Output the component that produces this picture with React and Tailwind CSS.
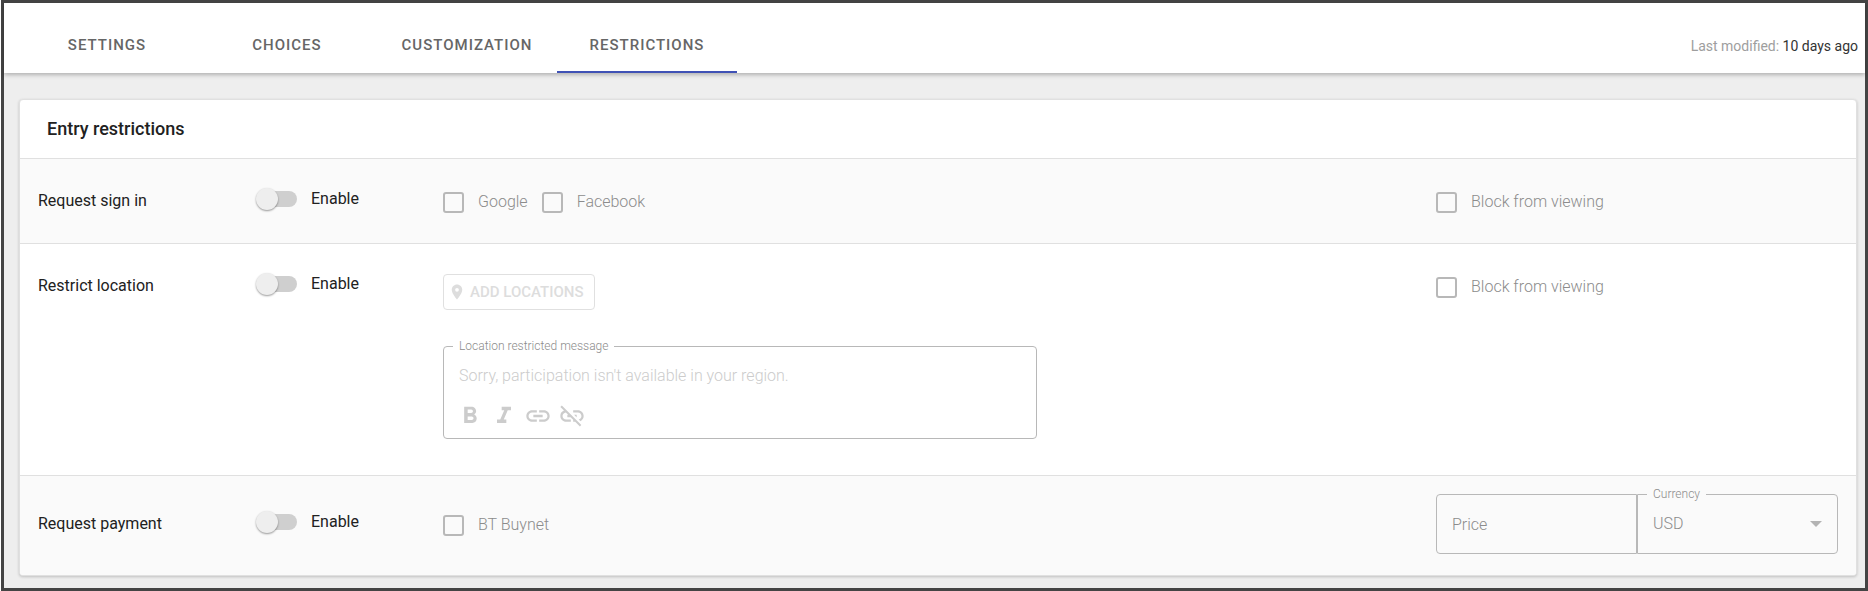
import { useState } from "react";
import clsx from "clsx";
import {
  MdFormatBold,
  MdFormatItalic,
  MdLink,
  MdLinkOff,
  MdLocationOn,
} from "react-icons/md";

const TABS = ["Settings", "Choices", "Customization", "Restrictions"];

const FORMAT_TOOLS = [
  { name: "Bold", Icon: MdFormatBold },
  { name: "Italic", Icon: MdFormatItalic },
  { name: "Insert link", Icon: MdLink },
  { name: "Remove link", Icon: MdLinkOff },
];

const Row = ({ title, checked, onToggle, className, options, side }) => (
  <div
    className={clsx(
      "grid grid-cols-[218px_187px_minmax(0,1fr)_402px] border-t border-[#e0e0e0] px-[18px]",
      className
    )}
  >
    <h3 className="leading-6">{title}</h3>
    <Toggle checked={checked} onChange={onToggle} title={title} />
    <div>{options}</div>
    <div>{side}</div>
  </div>
);

const Toggle = ({ checked, onChange, title }) => (
  <label className="flex h-6 items-center gap-[14px] pb-1 pl-[3px]">
    <input
      type="checkbox"
      role="switch"
      aria-label={`Enable ${title}`}
      checked={checked}
      onChange={onChange}
      className="relative h-4 w-[38px] appearance-none rounded-full bg-[#cfcfcf] before:absolute before:-top-[3px] before:-left-[3px] before:size-[22px] before:rounded-full before:bg-[#eee] before:shadow-[0_1px_2px_rgba(0,0,0,0.4)] checked:bg-[#9fa8da] checked:before:left-[19px] checked:before:bg-[#3f51b5]"
    />
    Enable
  </label>
);

const Checkbox = ({ label, disabled }) => (
  <label className="flex h-6 items-center gap-[14px] pt-[2px] font-light text-[#8c8c8c]">
    <input
      type="checkbox"
      disabled={disabled}
      className="size-[21px] appearance-none rounded-[3px] border-2 border-[#b8b8b8] checked:bg-[#3f51b5]"
    />
    {label}
  </label>
);

const App = () => {
  const [activeTab, setActiveTab] = useState("Restrictions");
  const [enabled, setEnabled] = useState({
    signIn: false,
    location: false,
    payment: false,
  });

  const toggle = (key) => () =>
    setEnabled((prev) => ({ ...prev, [key]: !prev[key] }));

  return (
    <div className="flex min-h-screen bg-white pl-px font-[Roboto,sans-serif] text-base text-[#212121]">
      <div className="min-w-0 grow border-3 border-[#444] bg-[#eee]">
        <header className="flex h-[70px] items-stretch justify-between bg-white pr-[7px] pl-[13px] shadow-[0_2px_4px_rgba(0,0,0,0.25)]">
          <nav className="flex">
            {TABS.map((tab) => (
              <button
                key={tab}
                type="button"
                onClick={() => setActiveTab(tab)}
                className={clsx(
                  "w-[180px] border-b-2 pt-4 text-[15px] font-medium tracking-[1px] text-[#666] uppercase",
                  activeTab === tab ? "border-[#3f51b5]" : "border-transparent"
                )}
              >
                {tab}
              </button>
            ))}
          </nav>
          <p className="self-center pt-4 text-sm text-[#9e9e9e]">
            Last modified: <span className="text-[#333]">10 days ago</span>
          </p>
        </header>

        <main className="pt-[26px] pr-2 pb-3 pl-[15px]">
          <section className="overflow-hidden rounded border border-[#e0e0e0] bg-white shadow-[0_1px_3px_rgba(0,0,0,0.2)]">
            <h2 className="px-[27px] py-[15px] text-lg font-medium">
              Entry restrictions
            </h2>

            <Row
              title="Request sign in"
              checked={enabled.signIn}
              onToggle={toggle("signIn")}
              className="bg-[#fafafa] py-[30px]"
              options={
                <div className="flex gap-[14px]">
                  <Checkbox label="Google" disabled={!enabled.signIn} />
                  <Checkbox label="Facebook" disabled={!enabled.signIn} />
                </div>
              }
              side={
                <Checkbox label="Block from viewing" disabled={!enabled.signIn} />
              }
            />

            <Row
              title="Restrict location"
              checked={enabled.location}
              onToggle={toggle("location")}
              className="pt-[30px] pb-9"
              options={
                <div className="flex flex-col items-start gap-7">
                  <button
                    type="button"
                    disabled={!enabled.location}
                    className="flex h-9 items-center gap-1 rounded border border-[#e0e0e0] pr-[10px] pl-1 text-[15px] font-medium text-[#ddd] uppercase"
                  >
                    <MdLocationOn size={18} />
                    Add locations
                  </button>
                  <fieldset
                    disabled={!enabled.location}
                    className="w-[594px] max-w-full rounded border border-[#b8b8b8] px-[9px] pb-2"
                  >
                    <legend className="px-[6px] text-xs font-light text-[#8c8c8c]">
                      <label htmlFor="message">Location restricted message</label>
                    </legend>
                    <textarea
                      id="message"
                      rows={1}
                      defaultValue="Sorry, participation isn't available in your region."
                      className="mt-[10px] block w-full resize-none px-[6px] leading-6 font-light text-[#ccc] outline-none"
                    />
                    <div className="mt-[14px] flex gap-[6px] px-[3px] text-[#ccc]">
                      {FORMAT_TOOLS.map(({ name, Icon }) => (
                        <button key={name} type="button" aria-label={name}>
                          <Icon size={28} />
                        </button>
                      ))}
                    </div>
                  </fieldset>
                </div>
              }
              side={
                <Checkbox
                  label="Block from viewing"
                  disabled={!enabled.location}
                />
              }
            />

            <Row
              title="Request payment"
              checked={enabled.payment}
              onToggle={toggle("payment")}
              className="items-center bg-[#fafafa] pt-[18px] pb-[21px]"
              options={
                <Checkbox label="BT Buynet" disabled={!enabled.payment} />
              }
              side={
                <div className="-mt-2 flex items-end">
                  <input
                    type="text"
                    aria-label="Price"
                    placeholder="Price"
                    disabled={!enabled.payment}
                    className="h-[60px] w-1/2 rounded-l border border-[#b8b8b8] px-[15px] font-light outline-none placeholder:text-[#8c8c8c]"
                  />
                  <fieldset
                    disabled={!enabled.payment}
                    className="h-[68px] w-1/2 rounded-r border border-[#b8b8b8] px-[9px]"
                  >
                    <legend className="px-[6px] text-xs font-light text-[#8c8c8c]">
                      <label htmlFor="currency">Currency</label>
                    </legend>
                    <div className="flex h-11 items-center pr-[6px]">
                      <select
                        id="currency"
                        className="grow appearance-none px-[6px] font-light text-[#8c8c8c] outline-none"
                      >
                        <option>USD</option>
                        <option>EUR</option>
                        <option>GBP</option>
                      </select>
                      <svg
                        viewBox="0 0 12 6"
                        className="h-[6px] w-3 fill-[#b3b3b3]"
                        aria-hidden="true"
                      >
                        <path d="M0 0h12L6 6z" />
                      </svg>
                    </div>
                  </fieldset>
                </div>
              }
            />
          </section>
        </main>
      </div>
    </div>
  );
};

export default App;
